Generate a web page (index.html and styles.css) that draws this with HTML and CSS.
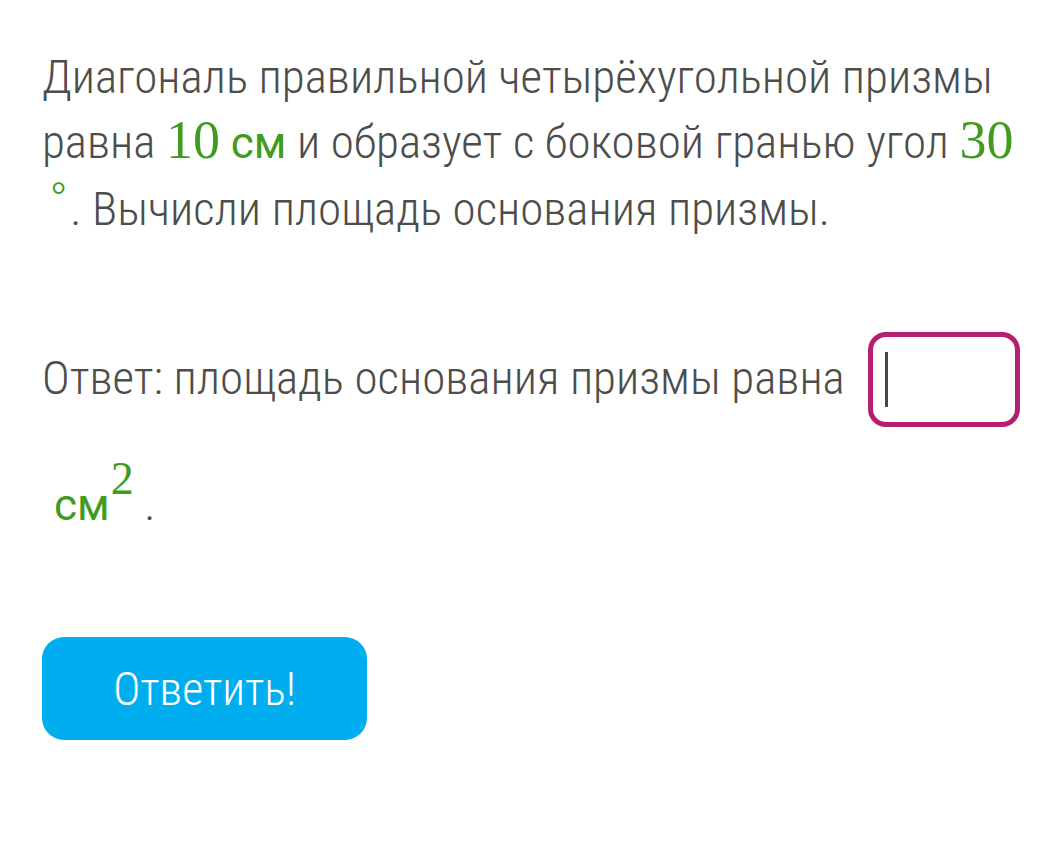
FILE: index.html
```html
<!DOCTYPE html>
<html lang="ru">
<head>
<meta charset="utf-8">
<link rel="stylesheet" href="styles.css">
</head>
<body>
<main class="task">
  <p class="question">Диагональ правильной четырёхугольной призмы равна <span class="math"><span class="num">10</span> <span class="unit">см</span></span> и образует с боковой гранью угол <span class="math"><span class="num">30</span><wbr><span class="deg">°</span></span>. Вычисли площадь основания призмы.</p>
  <p class="answer">Ответ: площадь основания призмы равна <span class="field"><span class="caret"></span></span> <span class="math lead"><span class="unit">см</span><sup class="num sup">2</sup></span> .</p>
  <button class="submit" type="button">Ответить!</button>
</main>
</body>
</html>
```

FILE: styles.css
```css
html, body {
  margin: 0;
  padding: 0;
  background: #ffffff;
}
body {
  font-family: Roboto, "Liberation Sans", sans-serif;
  font-weight: 300;
  font-stretch: 75%;
  color: #4d4d4b;
}
.task {
  padding: 44px 20px 0 42px;
}
.question {
  margin: 0;
  font-size: 47px;
  line-height: 65px;
}
.math {
  color: #419b20;
}
.num {
  font-family: "Liberation Serif", "DejaVu Serif", serif;
  font-weight: 400;
  font-stretch: 100%;
  font-size: 54px;
  line-height: 1;
}
.unit {
  font-weight: 400;
  font-stretch: 100%;
  font-size: 44px;
}
.deg {
  display: inline-block;
  padding: 0 4px 0 9px;
  font-family: "Liberation Serif", "DejaVu Serif", serif;
  font-weight: 400;
  font-stretch: 100%;
  font-size: 38px;
  line-height: 1;
  vertical-align: 17px;
}
.answer {
  margin: 74px 0 0;
  font-size: 47px;
  line-height: 126px;
}
.field {
  display: inline-block;
  box-sizing: border-box;
  width: 152px;
  height: 95px;
  margin-left: 13px;
  border: 5px solid #b51f72;
  border-radius: 18px;
  vertical-align: -33px;
  position: relative;
}
.caret {
  position: absolute;
  left: 12px;
  top: 15px;
  width: 3px;
  height: 55px;
  background: #474747;
}
.lead {
  padding-left: 12px;
}
.sup {
  font-size: 46px;
  line-height: 0;
  vertical-align: 26px;
  margin-left: 1px;
}
.submit {
  display: block;
  margin-top: 69px;
  width: 325px;
  height: 103px;
  border: none;
  border-radius: 22px;
  background: #00aeef;
  color: #ffffff;
  font-family: Roboto, "Liberation Sans", sans-serif;
  font-weight: 300;
  font-stretch: 75%;
  font-size: 46px;
}
```
